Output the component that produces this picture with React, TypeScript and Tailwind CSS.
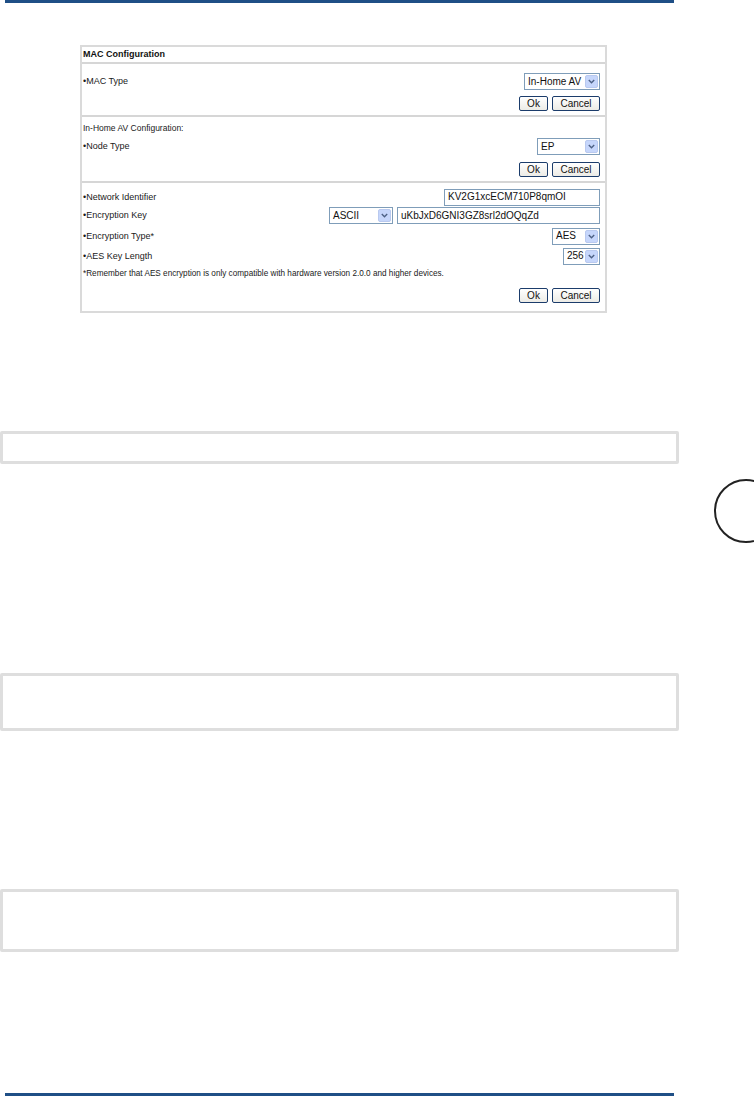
import React from "react";

const font = { fontFamily: '"Liberation Sans", Arial, sans-serif' };

function Select({ value, width }: { value: string; width: number }) {
  return (
    <div
      className="flex h-[17px] items-center justify-between border border-[#7f9db9] bg-white pl-[3px] pr-[1px] text-[10px] text-[#111]"
      style={{ width }}
    >
      <span className="leading-none">{value}</span>
      <span className="flex h-[13px] w-[13px] items-center justify-center rounded-[2px] border border-[#b9c9ef] bg-[#c6d6fb]">
        <svg width="7" height="5" viewBox="0 0 7 5">
          <path d="M0.8 1 L3.5 3.7 L6.2 1" fill="none" stroke="#4d6185" strokeWidth="1.4" />
        </svg>
      </span>
    </div>
  );
}

function TextBox({ value, width }: { value: string; width: number }) {
  return (
    <div
      className="flex h-[17px] items-center border border-[#7f9db9] bg-white pl-[3px] text-[10px] leading-none text-[#111]"
      style={{ width }}
    >
      {value}
    </div>
  );
}

function Buttons() {
  return (
    <div className="flex h-[15px] justify-end gap-[4px]">
      <button className="h-[15px] w-[29px] rounded-[2px] border border-[#1b3c6b] bg-gradient-to-b from-white to-[#ecebe6] text-[10px] leading-none text-[#111]">
        Ok
      </button>
      <button className="h-[15px] w-[48px] rounded-[2px] border border-[#1b3c6b] bg-gradient-to-b from-white to-[#ecebe6] text-[10px] leading-none text-[#111]">
        Cancel
      </button>
    </div>
  );
}

function Row({ label, children, h = 18 }: { label: string; children?: React.ReactNode; h?: number }) {
  return (
    <div className="flex items-center justify-between" style={{ height: h }}>
      <span className="text-[9px] leading-none text-[#1a1a1a]">{label}</span>
      <div className="flex items-center gap-[4px]">{children}</div>
    </div>
  );
}

function MacForm() {
  return (
    <div className="ml-[80px] flex h-[268px] w-[527px] flex-col border-2 border-[#dadada] bg-white" style={font}>
      <div className="flex h-[15px] items-center pl-[1px] text-[9px] font-bold leading-none text-[#111]">
        MAC Configuration
      </div>
      <div className="h-[2px] bg-[#d6d6d6]" />
      <div className="flex flex-col pl-[1px] pr-[5px] pt-[8px]">
        <Row label="•MAC Type" h={19}>
          <Select value="In-Home AV" width={76} />
        </Row>
        <div className="mt-[5px]">
          <Buttons />
        </div>
      </div>
      <div className="mt-[4px] h-[2px] bg-[#d6d6d6]" />
      <div className="flex flex-col pl-[1px] pr-[5px] pt-[3px]">
        <div className="flex h-[17px] items-center text-[8.5px] leading-none text-[#1a1a1a]">In-Home AV Configuration:</div>
        <Row label="•Node Type" h={19}>
          <Select value="EP" width={63} />
        </Row>
        <div className="mt-[6px]">
          <Buttons />
        </div>
      </div>
      <div className="mt-[4px] h-[2px] bg-[#d6d6d6]" />
      <div className="flex flex-col pl-[1px] pr-[5px] pt-[5px]">
        <Row label="•Network Identifier" h={18}>
          <TextBox value="KV2G1xcECM710P8qmOI" width={156} />
        </Row>
        <Row label="•Encryption Key" h={19}>
          <Select value="ASCII" width={64} />
          <TextBox value="uKbJxD6GNI3GZ8srl2dOQqZd" width={203} />
        </Row>
        <Row label="•Encryption Type*" h={22}>
          <Select value="AES" width={48} />
        </Row>
        <Row label="•AES Key Length" h={18}>
          <Select value="256" width={37} />
        </Row>
        <div className="flex h-[18px] items-center text-[8.2px] leading-none text-[#1a1a1a]">
          *Remember that AES encryption is only compatible with hardware version 2.0.0 and higher devices.
        </div>
        <div className="mt-[5px]">
          <Buttons />
        </div>
      </div>
    </div>
  );
}

function NoteBox({ h }: { h: number }) {
  return <div className="w-[679px] rounded-[2px] border-[3px] border-[#dedede] bg-white" style={{ height: h }} />;
}

export default function App() {
  return (
    <div className="relative h-[1096px] w-[754px] overflow-hidden bg-white" style={font}>
      <div className="ml-[5px] h-[3px] w-[669px] bg-[#1f4f86]" />

      <div className="mt-[42px]">
        <MacForm />
      </div>

      <div className="mt-[118px]">
        <NoteBox h={33} />
      </div>

      {/* chapter tab circle */}
      <div className="mt-[15px] flex h-[64px] justify-end">
        <div className="h-[64px] w-[40px] overflow-hidden">
          <div className="h-[64px] w-[64px] rounded-full border-2 border-[#222]" />
        </div>
      </div>

      <div className="mt-[130px]">
        <NoteBox h={58} />
      </div>

      <div className="mt-[158px]">
        <NoteBox h={63} />
      </div>

      <div className="ml-[5px] mt-[141px] h-[3px] w-[669px] bg-[#1f4f86]" />
    </div>
  );
}
